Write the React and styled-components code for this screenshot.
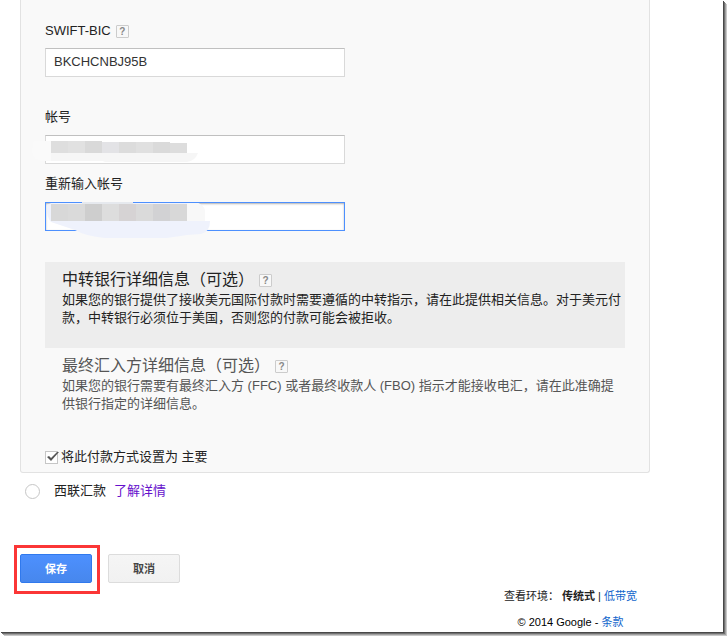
import { useState } from "react";
import styled, { createGlobalStyle } from "styled-components";

const GlobalStyle = createGlobalStyle`
  * {
    box-sizing: border-box;
  }
  body {
    margin: 0;
    background-color: #fff;
    color: #222;
    font-family: "Liberation Sans", "Noto Sans CJK SC", sans-serif;
    font-size: 13px;
    line-height: 18px;
  }
  input, button {
    font-family: inherit;
    margin: 0;
  }
`;

const Page = styled.main`
  display: flex;
  flex-direction: column;
  min-height: calc(100vh - 4px);
  margin: 0 4px 4px 0;
  padding: 0 73px 2px 20px;
  background-color: #fff;
  box-shadow: 1px 1px 0 #484848, 2px 2px 0 #707070, 3px 3px 0 #a0a0a0,
    4px 4px 0 #c8c8c8;
`;

const Panel = styled.section`
  padding: 22px 24px 6px;
  background-color: #f9f9f9;
  border: 1px solid #e2e2e2;
  border-top: none;
  border-radius: 0 0 3px 3px;
`;

const Field = styled.div`
  display: flex;
  flex-direction: column;
  gap: ${(props) => (props.$first ? "8px" : "9px")};
  margin-bottom: ${(props) => (props.$tight ? "11px" : "31px")};
`;

const LabelRow = styled.div`
  display: flex;
  align-items: center;
  gap: 5px;
`;

const InputBox = styled.div`
  position: relative;
  width: 100%;
  max-width: 300px;
`;

const TextInput = styled.input`
  display: block;
  width: 100%;
  height: 29px;
  padding: 0 8px 2px;
  border: 1px solid ${(props) => (props.$active ? "#4d90fe" : "#d9d9d9")};
  border-top-color: ${(props) => (props.$active ? "#4d90fe" : "#c0c0c0")};
  box-shadow: ${(props) =>
    props.$active ? "inset 0 1px 2px rgba(0, 0, 0, 0.3)" : "none"};
  background-color: #fff;
  color: #333;
  font-size: 13px;
  outline: none;
`;

const Mosaic = styled.svg`
  position: absolute;
  left: -15px;
  top: 0;
  pointer-events: none;
`;

const HelpButton = styled.button`
  display: flex;
  align-items: center;
  justify-content: center;
  width: 13px;
  height: 13px;
  padding: 0;
  border: 1px solid #ccc;
  border-radius: 1px;
  background-color: #f8f8f8;
  color: #888;
  font-size: 10px;
  font-weight: bold;
  line-height: 11px;
  cursor: pointer;
`;

const Option = styled.section`
  padding: 7px 4px 21px 17px;
  color: ${(props) => (props.$active ? "#222" : "#555")};
  background-color: ${(props) => (props.$active ? "#ededed" : "transparent")};
`;

const OptionHead = styled.div`
  display: flex;
  align-items: center;
  gap: 5px;
  height: 22px;
`;

const OptionTitle = styled.h3`
  margin: 0;
  font-size: 16px;
  font-weight: normal;
  line-height: 22px;
`;

const OptionText = styled.p`
  margin: 0;
`;

const CheckRow = styled.label`
  display: flex;
  align-items: center;
  gap: 3px;
  margin-top: 14px;
`;

const CheckBox = styled.span`
  position: relative;
  width: 13px;
  height: 13px;
`;

const CheckInput = styled.input`
  appearance: none;
  display: block;
  width: 13px;
  height: 13px;
  border: 1px solid #c6c6c6;
  background-color: #fff;
`;

const Tick = styled.svg`
  position: absolute;
  left: 0;
  top: 0;
  pointer-events: none;
`;

const RadioRow = styled.div`
  display: flex;
  align-items: center;
  margin: 9px 0 54px 5px;
`;

const RadioInput = styled.input`
  appearance: none;
  width: 15px;
  height: 15px;
  border: 1px solid #c6c6c6;
  border-radius: 50%;
  background-color: #fff;
  &:checked {
    background-color: #888;
  }
`;

const RadioLabel = styled.label`
  margin: 0 8px 0 14px;
`;

const Link = styled.a`
  color: ${(props) => (props.$visited ? "#6611cc" : "#1166cc")};
  text-decoration: none;
`;

const Actions = styled.div`
  display: flex;
  gap: 16px;
`;

const Marked = styled.div`
  position: relative;
  &::after {
    content: "";
    position: absolute;
    inset: -9px -8px -11px -6px;
    border: 3px solid #fb3636;
    pointer-events: none;
  }
`;

const Button = styled.button`
  min-width: 72px;
  height: 29px;
  padding: 0 8px 2px;
  border: 1px solid ${(props) => (props.$primary ? "#3079ed" : "#dcdcdc")};
  border-radius: 2px;
  background-image: ${(props) =>
    props.$primary
      ? "linear-gradient(#4d90fe, #4787ed)"
      : "linear-gradient(#f5f5f5, #f1f1f1)"};
  color: ${(props) => (props.$primary ? "#fff" : "#444")};
  font-size: 11px;
  font-weight: bold;
  cursor: pointer;
`;

const Footer = styled.footer`
  display: flex;
  flex-direction: column;
  align-items: center;
  gap: 10px;
  align-self: flex-end;
  margin: 5px 13px 0 0;
  font-size: 11px;
  line-height: 16px;
`;

const FooterLine = styled.div`
  color: ${(props) => (props.$dark ? "#000" : "#222")};
`;

const Help = () => (
  <HelpButton type="button" aria-label="帮助">
    ?
  </HelpButton>
);

const upperBlocks = ["#dedede", "#e1e1e1", "#d9d9d9", "#e3e3e6", "#dcdcdc", "#e0e0e0", "#dadada", "#dddddd"];
const lowerBlocks = ["#d8d8d8", "#dadada", "#cecece", "#dddddd", "#d6d3d4", "#dadada", "#d2d2d4", "#d8d8d8"];

const AccountMosaic = () => (
  <Mosaic width="190" height="36" aria-hidden="true">
    <path d="M4 6H21V26H12Q3 25 2 16Q2 9 4 6Z" fill="#fafafa" />
    <path d="M21 18H168Q165 26 157 27H75L73 26H21Z" fill="#f6f6f6" />
    {upperBlocks.map((fill, i) => (
      <rect
        key={i}
        x={21 + i * 17}
        y={i < 3 ? 6 : i < 7 ? 7 : 8}
        width="17"
        height={i < 3 ? 12 : i < 7 ? 11 : 10}
        fill={fill}
      />
    ))}
  </Mosaic>
);

const ConfirmMosaic = () => (
  <Mosaic width="190" height="38" aria-hidden="true">
    <path d="M17 3L21 1H168Q174 3 175 10V19H180Q180 30 171 32L157 33L137 36H75Q55 34 45 28L21 20Q16 15 17 3Z" fill="#eff2fc" />
    <path d="M157 1H168Q174 4 175 9V19H157Z" fill="#f8f8f8" />
    <path d="M52 0H103V2H52Z" fill="#e6e9ee" />
    {lowerBlocks.map((fill, i) => (
      <rect key={i} x={21 + i * 17} y="2" width="17" height="17" fill={fill} />
    ))}
  </Mosaic>
);

const App = () => {
  const [swift, setSwift] = useState("BKCHCNBJ95B");
  const [account, setAccount] = useState("");
  const [confirm, setConfirm] = useState("");
  const [primary, setPrimary] = useState(true);

  return (
    <>
      <GlobalStyle />
      <Page lang="zh-CN">
        <Panel>
          <Field $first>
            <LabelRow>
              <label htmlFor="swift">SWIFT-BIC</label>
              <Help />
            </LabelRow>
            <InputBox>
              <TextInput
                id="swift"
                value={swift}
                onChange={(e) => setSwift(e.target.value)}
              />
            </InputBox>
          </Field>
          <Field $tight>
            <label htmlFor="account">帐号</label>
            <InputBox>
              <TextInput
                id="account"
                value={account}
                onChange={(e) => setAccount(e.target.value)}
              />
              <AccountMosaic />
            </InputBox>
          </Field>
          <Field>
            <label htmlFor="confirm">重新输入帐号</label>
            <InputBox>
              <TextInput
                id="confirm"
                $active
                value={confirm}
                onChange={(e) => setConfirm(e.target.value)}
              />
              <ConfirmMosaic />
            </InputBox>
          </Field>
          <Option $active>
            <OptionHead>
              <OptionTitle>中转银行详细信息（可选）</OptionTitle>
              <Help />
            </OptionHead>
            <OptionText>
              如果您的银行提供了接收美元国际付款时需要遵循的中转指示，请在此提供相关信息。对于美元付款，中转银行必须位于美国，否则您的付款可能会被拒收。
            </OptionText>
          </Option>
          <Option>
            <OptionHead>
              <OptionTitle>最终汇入方详细信息（可选）</OptionTitle>
              <Help />
            </OptionHead>
            <OptionText>
              如果您的银行需要有最终汇入方 (FFC) 或者最终收款人 (FBO)
              指示才能接收电汇，请在此准确提供银行指定的详细信息。
            </OptionText>
          </Option>
          <CheckRow>
            <CheckBox>
              <CheckInput
                type="checkbox"
                checked={primary}
                onChange={(e) => setPrimary(e.target.checked)}
              />
              {primary && (
                <Tick width="15" height="13" viewBox="0 0 15 13" aria-hidden="true">
                  <path d="M2 6L4 5L6 7L12 1H14L6 10Z" fill="#555" />
                </Tick>
              )}
            </CheckBox>
            将此付款方式设置为 主要
          </CheckRow>
        </Panel>
        <RadioRow>
          <RadioInput type="radio" id="western" name="method" />
          <RadioLabel htmlFor="western">西联汇款</RadioLabel>
          <Link href="#details" $visited>
            了解详情
          </Link>
        </RadioRow>
        <Actions>
          <Marked>
            <Button type="button" $primary>
              保存
            </Button>
          </Marked>
          <Button type="button">取消</Button>
        </Actions>
        <Footer>
          <FooterLine>
            查看环境： <b>传统式</b> | <Link href="#low">低带宽</Link>
          </FooterLine>
          <FooterLine $dark>
            © 2014 Google - <Link href="#terms">条款</Link>
          </FooterLine>
        </Footer>
      </Page>
    </>
  );
};

export default App;
